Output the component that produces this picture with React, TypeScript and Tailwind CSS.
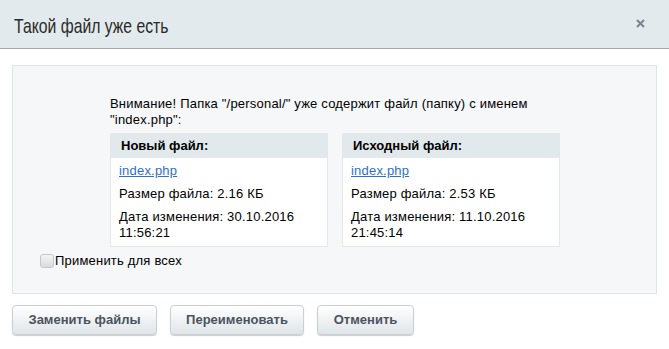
import React from "react";

function Card({ title, size, date, time }: { title: string; size: string; date: string; time: string }) {
  return (
    <div className="w-[218px] bg-white border border-[#e3e8ea]">
      <div className="h-[24px] bg-[#e1e9ec] pl-[10px] flex items-center font-bold text-[13px] text-black">{title}</div>
      <div className="pl-[8px] pt-[5px] pb-[5px] text-[13px] leading-[16px] text-black tracking-[0.2px]">
        <div><a className="text-[#2f6fc8] underline">index.php</a></div>
        <div className="mt-[7px]">Размер файла: {size}</div>
        <div className="mt-[7px]">Дата изменения: {date}<br />{time}</div>
      </div>
    </div>
  );
}

function Btn({ children, w }: { children: React.ReactNode; w: string }) {
  return (
    <button
      className={`${w} h-[30px] rounded-[4px] border border-[#c9d0d4] bg-gradient-to-b from-white to-[#dfe5e8] shadow-[0_1px_1px_rgba(0,0,0,0.2)] text-[13px] font-bold text-[#4b545d] flex items-center justify-center`}
    >
      {children}
    </button>
  );
}

export default function App() {
  return (
    <div className="w-[669px] h-[349px] bg-white overflow-hidden" style={{ fontFamily: '"Liberation Sans", Arial, sans-serif' }}>
      <div className="h-[49px] bg-[#e2eaed] border-b border-[#a6a9ab] flex items-center justify-between pl-[14px] pr-[24px]">
        <div className="w-[160px] pt-[3px]">
          <div className="inline-block whitespace-nowrap text-[21px] text-[#2a2a2a] origin-left scale-x-[0.75]">
            Такой файл уже есть
          </div>
        </div>
        <svg width="9" height="9" viewBox="0 0 9 9" className="mb-[1px]">
          <path d="M1 1 L8 8 M8 1 L1 8" stroke="#7a8591" strokeWidth="2" />
        </svg>
      </div>
      <div className="mx-[12px] mt-[16px] h-[229px] bg-[#f5f7f8] border border-[#dde5e9] pt-[30px]">
        <div className="pl-[97px]">
          <div className="w-[452px] text-[13px] leading-[16px] text-black tracking-[0.2px]">
            Внимание! Папка "/personal/" уже содержит файл (папку) с именем "index.php":
          </div>
          <div className="flex gap-[14px] mt-[5px]">
            <Card title="Новый файл:" size="2.16 КБ" date="30.10.2016" time="11:56:21" />
            <Card title="Исходный файл:" size="2.53 КБ" date="11.10.2016" time="21:45:14" />
          </div>
        </div>
        <div className="flex items-center pl-[27px] mt-[4px]">
          <div className="w-[14px] h-[14px] rounded-[3px] border border-[#c3c8cb] bg-gradient-to-b from-[#f4f4f4] to-[#d9dcde]" />
          <span className="ml-[1px] text-[13px] text-black tracking-[0.2px]">Применить для всех</span>
        </div>
      </div>
      <div className="flex gap-[13px] pl-[12px] mt-[11px]">
        <Btn w="w-[145px]">Заменить файлы</Btn>
        <Btn w="w-[134px]">Переименовать</Btn>
        <Btn w="w-[97px]">Отменить</Btn>
      </div>
    </div>
  );
}
